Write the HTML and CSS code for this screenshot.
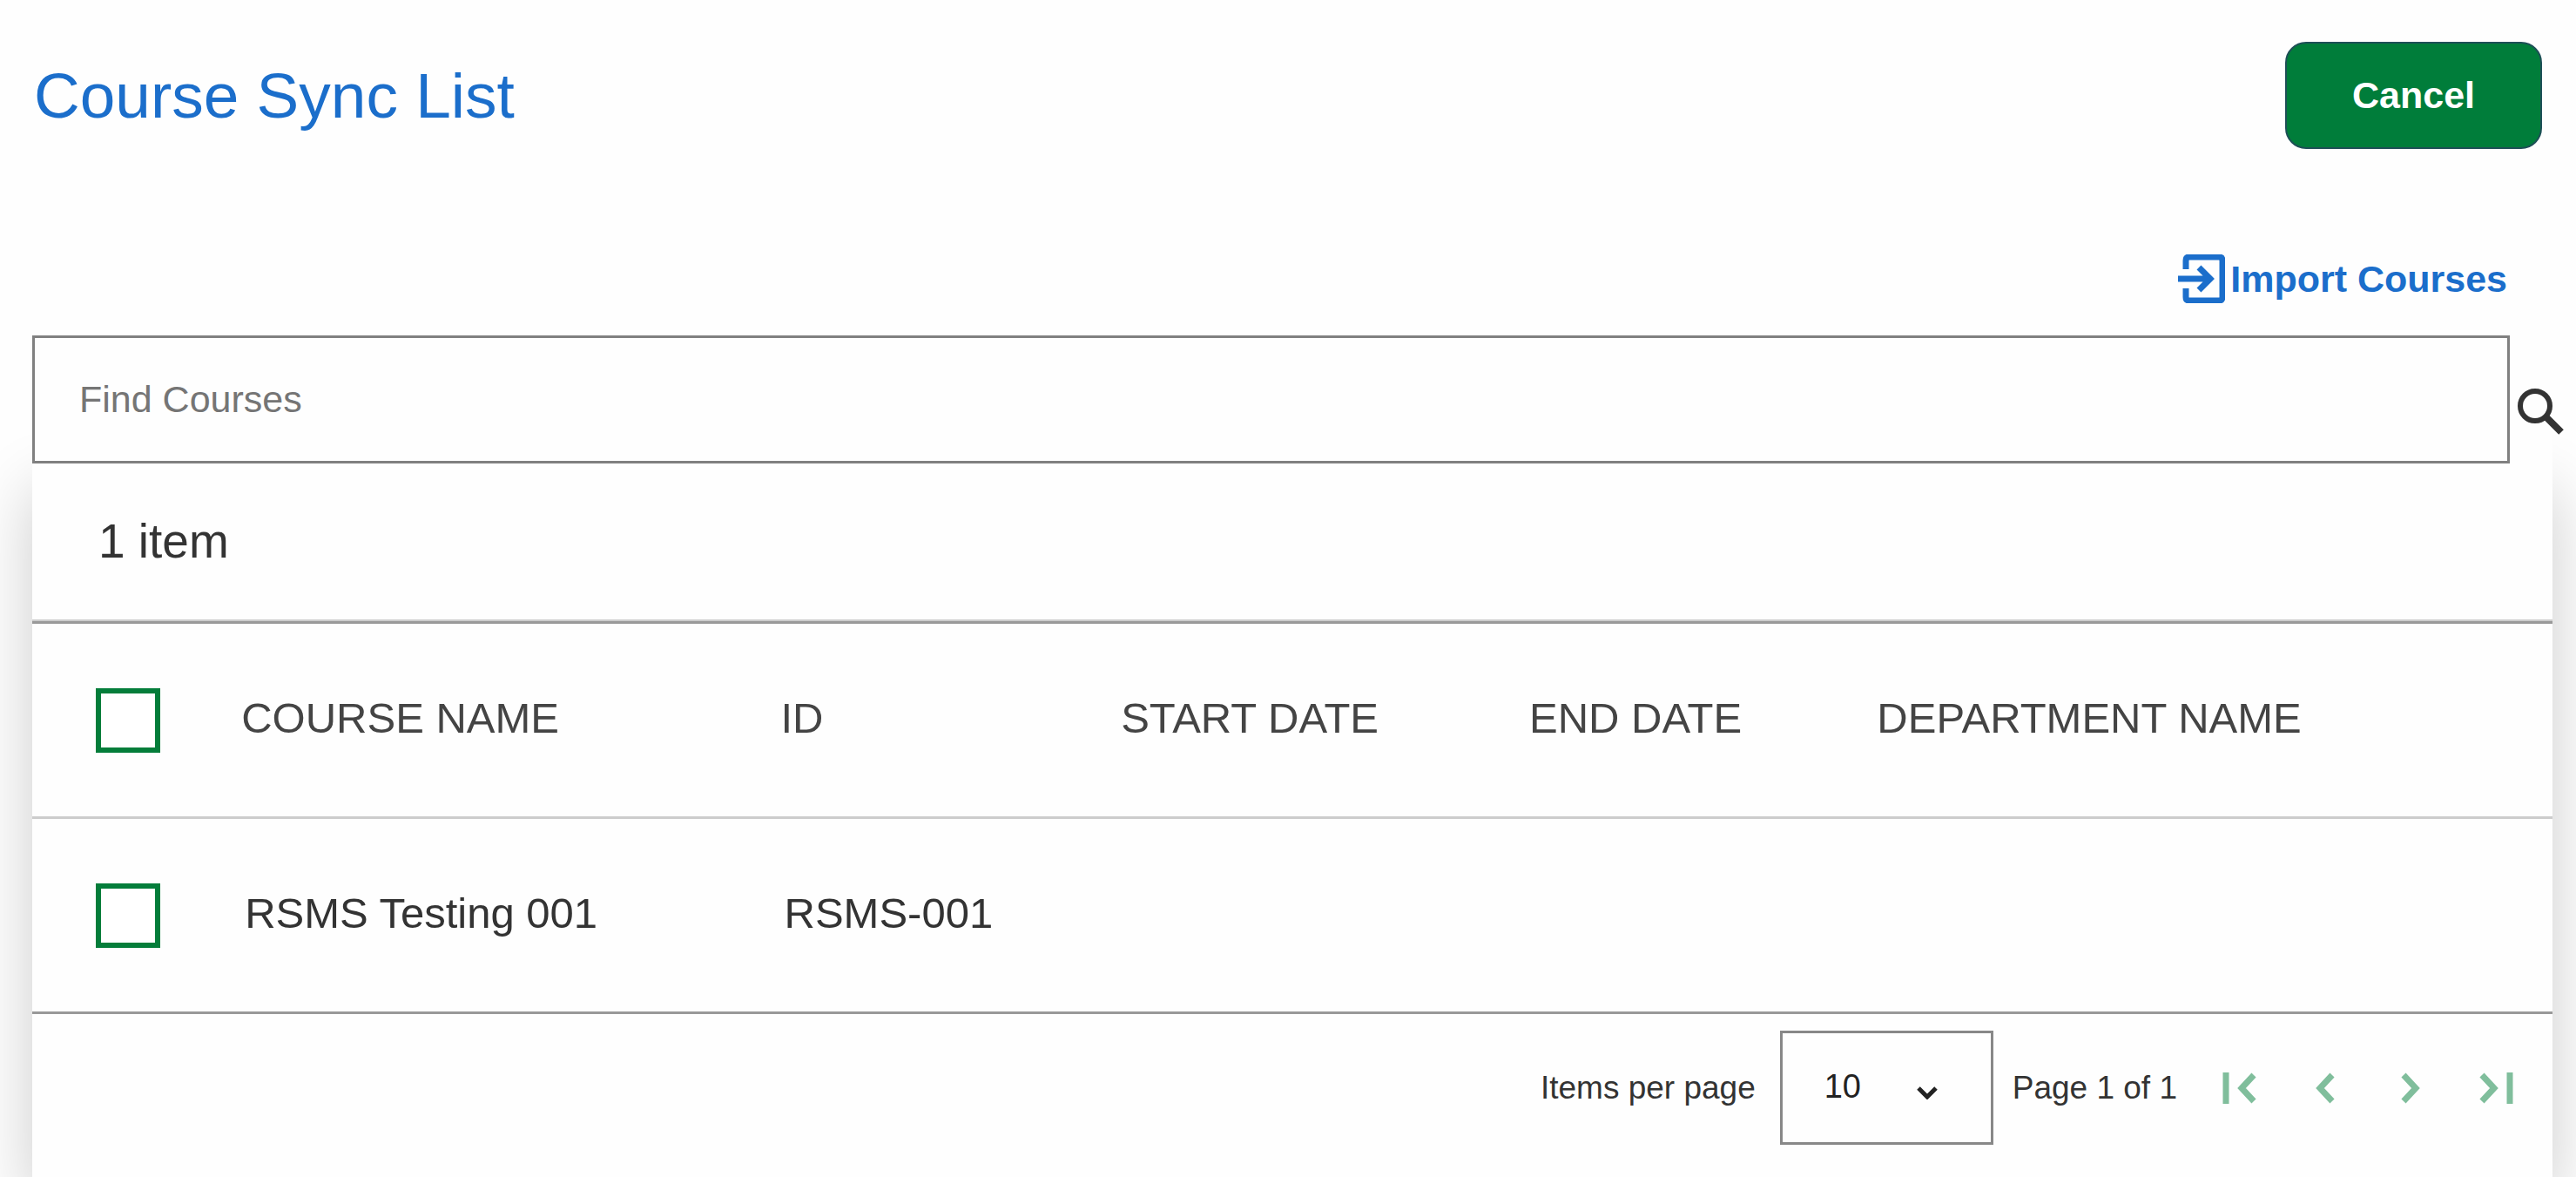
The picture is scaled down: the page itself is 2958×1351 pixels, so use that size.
FILE: index.html
```html
<!DOCTYPE html>
<html lang="en">
<head>
    <meta charset="UTF-8">
    <meta name="viewport" content="width=device-width, initial-scale=1.0">
    <title>Course Sync List</title>
    <link rel="stylesheet" href="styles.css">
</head>
<body>
    <header class="page-header">
        <h1>Course Sync List</h1>
        <button type="button" class="btn-cancel">Cancel</button>
    </header>
    <main>
        <div class="actions">
            <a href="#import" class="import-link">
                <svg class="import-icon" viewBox="0 0 54 56" aria-hidden="true">
                    <path d="M9 17V7q0-4 4-4h34q4 0 4 4v42q0 4-4 4H13q-4 0-4-4V39"/>
                    <path d="M0 28h36M24 15l13 13-13 13"/>
                </svg>
                Import Courses
            </a>
        </div>
        <form class="search">
            <input type="text" id="find" class="search-input" placeholder="Find Courses" aria-label="Find Courses">
            <button type="submit" class="search-btn" aria-label="Search">
                <svg class="search-icon" viewBox="0 0 54 54" aria-hidden="true">
                    <circle cx="20" cy="20" r="17"/>
                    <path d="M32 32l18 18" stroke-width="8"/>
                </svg>
            </button>
        </form>
        <section class="panel">
            <p class="count">1 item</p>
            <table class="courses">
                <colgroup>
                    <col class="col-check">
                    <col class="col-name">
                    <col class="col-id">
                    <col class="col-start">
                    <col class="col-end">
                    <col>
                </colgroup>
                <thead>
                    <tr>
                        <th class="check"><input type="checkbox" aria-label="Select all courses"></th>
                        <th>COURSE NAME</th>
                        <th>ID</th>
                        <th>START DATE</th>
                        <th>END DATE</th>
                        <th>DEPARTMENT NAME</th>
                    </tr>
                </thead>
                <tbody>
                    <tr>
                        <td class="check"><input type="checkbox" aria-label="Select RSMS Testing 001"></td>
                        <td>RSMS Testing 001</td>
                        <td>RSMS-001</td>
                        <td></td>
                        <td></td>
                        <td></td>
                    </tr>
                </tbody>
            </table>
            <div class="pagination">
                <label for="perPage">Items per page</label>
                <div class="select-box">
                    <select id="perPage">
                        <option>10</option>
                        <option>25</option>
                        <option>50</option>
                    </select>
                    <svg class="caret" viewBox="0 0 24 16" aria-hidden="true">
                        <path d="M2 3l10 10 10-10"/>
                    </svg>
                </div>
                <span>Page 1 of 1</span>
                <nav class="pager" aria-label="Pages">
                    <button type="button" disabled aria-label="First page">
                        <svg viewBox="0 0 40 40" aria-hidden="true"><path d="M4 2v36M36 5L22 20l14 15"/></svg>
                    </button>
                    <button type="button" disabled aria-label="Previous page">
                        <svg viewBox="0 0 40 40" aria-hidden="true"><path d="M28 5L14 20l14 15"/></svg>
                    </button>
                    <button type="button" disabled aria-label="Next page">
                        <svg viewBox="0 0 40 40" aria-hidden="true"><path d="M12 5l14 15-14 15"/></svg>
                    </button>
                    <button type="button" disabled aria-label="Last page">
                        <svg viewBox="0 0 40 40" aria-hidden="true"><path d="M4 5l14 15L4 35M36 2v36"/></svg>
                    </button>
                </nav>
            </div>
        </section>
    </main>
</body>
</html>
```

FILE: styles.css
```css
* {
    box-sizing: border-box;
}
body {
    display: flex;
    flex-direction: column;
    min-height: 100vh;
    margin: 0;
    background: #fefefe;
    color: #333;
    font-family: "Liberation Sans", Arial, sans-serif;
}
main {
    display: flex;
    flex-direction: column;
    flex: 1;
}
svg {
    display: block;
    fill: none;
    stroke: currentColor;
    stroke-width: 6;
}
/* Title and cancel button */
.page-header {
    display: flex;
    justify-content: space-between;
    align-items: center;
    padding: 48px 39px 0;
}
h1 {
    margin: 0;
    color: #1b6ecb;
    font-size: 73px;
    font-weight: normal;
    line-height: 80px;
}
.btn-cancel {
    padding: 36px 75px;
    border: 2px solid #1d4f56;
    border-radius: 24px;
    background: #007d3a;
    color: #fff;
    font-family: inherit;
    font-size: 43px;
    font-weight: bold;
    line-height: 47px;
    cursor: pointer;
}
/* Import link */
.actions {
    display: flex;
    justify-content: flex-end;
    padding: 119px 79px 35px;
}
.import-link {
    display: flex;
    align-items: center;
    gap: 6px;
    color: #1b6ecb;
    font-size: 43px;
    font-weight: bold;
    line-height: 60px;
    text-decoration: none;
}
.import-icon {
    width: 54px;
    height: 56px;
    stroke-width: 7;
}
/* Search box, sits over the panel shadow */
.search {
    display: flex;
    align-items: center;
    z-index: 1;
    margin: 0 27px 0 37px;
    background: #fefefe;
}
.search-input {
    flex: 1;
    min-width: 0;
    height: 147px;
    padding: 0 51px;
    border: 3px solid #808080;
    border-radius: 0;
    background: #fefefe;
    color: #333;
    font-family: inherit;
    font-size: 43px;
}
.search-input::placeholder {
    color: #757575;
    opacity: 1;
}
.search-btn {
    margin-right: -27px;
    padding: 28px 13px 0 9px;
    border: none;
    background: none;
    color: #333;
    cursor: pointer;
}
.search-icon {
    width: 54px;
    height: 54px;
}
/* Results */
.panel {
    flex: 1;
    margin: 0 27px 0 37px;
    background: #fefefe;
    box-shadow: 0 30px 70px rgba(0, 0, 0, 0.2);
}
.count {
    margin: 0;
    padding: 56px 76px;
    border-bottom: 2px solid #ccc;
    font-size: 55px;
    line-height: 67px;
}
.courses {
    width: 100%;
    border-collapse: collapse;
    table-layout: fixed;
    border-top: 3px solid #999;
    border-bottom: 3px solid #999;
    font-size: 49px;
}
.courses th,
.courses td {
    height: 224px;
    padding: 0 0 6px;
    font-weight: normal;
    text-align: left;
}
.courses th {
    border-bottom: 3px solid #ccc;
    color: #444;
}
.courses td {
    padding-left: 4px;
}
.courses .check {
    padding: 0 0 0 73px;
}
.col-check {
    width: 8.3%;
}
.col-name {
    width: 21.4%;
}
.col-id {
    width: 13.5%;
}
.col-start {
    width: 16.2%;
}
.col-end {
    width: 13.8%;
}
.check input {
    appearance: none;
    display: block;
    width: 74px;
    height: 74px;
    margin: 0;
    border: 6px solid #047d3a;
    background: #fff;
}
.check input:checked {
    background: #047d3a;
}
/* Pagination */
.pagination {
    display: flex;
    justify-content: flex-end;
    align-items: center;
    padding: 19px 25px 37px;
    font-size: 37px;
}
.select-box {
    position: relative;
    margin: 0 22px 0 28px;
}
.select-box select {
    appearance: none;
    width: 245px;
    height: 131px;
    padding: 0 48px 4px;
    border: 3px solid #888;
    border-radius: 0;
    background: #fefefe;
    color: #222;
    font-family: inherit;
    font-size: 38px;
}
.caret {
    position: absolute;
    top: 63px;
    right: 64px;
    width: 24px;
    height: 16px;
    color: #222;
    stroke-width: 5;
    pointer-events: none;
}
.pager {
    display: flex;
    gap: 18px;
    margin-left: 32px;
}
.pager button {
    padding: 20px;
    border: none;
    background: none;
    color: #80be9c;
}
.pager svg {
    width: 40px;
    height: 40px;
    stroke-width: 7;
}
```
